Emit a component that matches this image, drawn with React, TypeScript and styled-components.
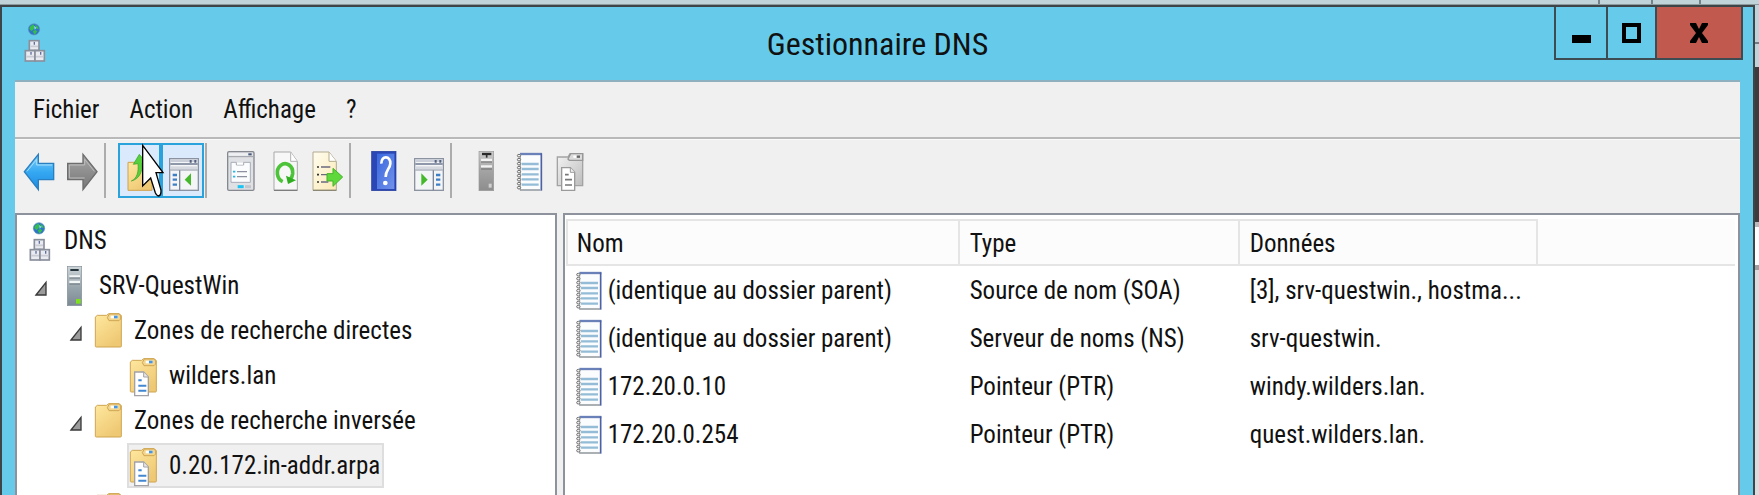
import React from "react";
import styled, { createGlobalStyle, css } from "styled-components";

const GlobalStyle = createGlobalStyle`
  *, *::before, *::after { box-sizing: border-box; }
  body {
    margin: 0;
    color: #111;
    font-family: "Roboto Condensed", "Open Sans", "Liberation Sans", sans-serif;
    font-size: 25px;
    line-height: 32px;
  }
  button { font: inherit; color: inherit; background: none; border: 0; padding: 0; margin: 0; }
  ul { list-style: none; margin: 0; padding: 0; }
  svg { display: block; overflow: visible; flex: none; }
`;

/* ---------- desktop behind the window ---------- */

const Desktop = styled.div`
  display: flex;
  flex-direction: column;
  height: 100vh;
  overflow: hidden;
  background: #c0d3d8;
`;

const BackTabs = styled.div`
  display: flex;
  justify-content: flex-end;
  flex: none;
  height: 5px;
  border-bottom: 1px solid #8d9a9e;
`;

const BackTab = styled.div<{ $width: number }>`
  width: ${(p) => p.$width}px;
  border-left: 2px solid #75828a;
`;

const Stage = styled.div`
  display: flex;
  flex: 1;
  min-height: 0;
`;

const BackEdge = styled.div`
  display: flex;
  flex-direction: column;
  flex: none;
  width: 4px;
`;

const EdgePart = styled.div<{ $height?: number; $color: string }>`
  background: ${(p) => p.$color};
  ${(p) => (p.$height ? css`height: ${p.$height}px; flex: none;` : css`flex: 1;`)}
`;

/* ---------- window ---------- */

const Window = styled.main`
  display: flex;
  flex-direction: column;
  flex: 1;
  min-width: 0;
  background: #66cbea;
  border: 2px solid #3d4549;
  border-bottom: 0;
`;

const TitleBar = styled.header`
  display: grid;
  grid-template-columns: 1fr auto 1fr;
  align-items: start;
  flex: none;
  height: 73px;
`;

const AppIcon = styled.span`
  padding: 15px 0 0 18px;
`;

const Title = styled.h1`
  margin: 0;
  padding-top: 17px;
  font-size: 32px;
  font-weight: 400;
  line-height: 40px;
`;

const Caption = styled.div`
  display: flex;
  justify-self: end;
  margin-right: 10px;
  border: 2px solid #3d4b52;
  border-top: 0;
`;

const CaptionButton = styled.button<{ $width: number; $danger?: boolean }>`
  display: flex;
  align-items: center;
  justify-content: center;
  width: ${(p) => p.$width}px;
  height: 51px;
  background: ${(p) => (p.$danger ? "#c1594f" : "transparent")};
  & + & { border-left: 2px solid #3d4b52; }
`;

const Client = styled.div`
  display: flex;
  flex-direction: column;
  flex: 1;
  min-height: 0;
  margin: 0 13px;
  background: #f0f0f0;
  border-top: 2px solid #8fb0be;
`;

const MenuBar = styled.nav`
  display: flex;
  gap: 30px;
  flex: none;
  padding: 12px 18px 11px;
  border-bottom: 2px solid #b9b9b9;
`;

const Toolbar = styled.div`
  display: flex;
  flex: none;
  padding: 3px 2px 15px;
  border-top: 1px solid #f8fafc;
`;

const ToolButton = styled.button<{ $active?: boolean }>`
  position: relative;
  display: flex;
  align-items: center;
  justify-content: center;
  width: 43px;
  height: 55px;
  ${(p) =>
    p.$active &&
    css`
      background: #dbe9fc;
      box-shadow: inset 0 0 0 2px #2aa2dc;
    `}
`;

const ToolSeparator = styled.span`
  width: 2px;
  margin: 0 12px 0 1px;
  background: #acacac;
`;

const Pointer = styled.svg`
  position: absolute;
  left: 24px;
  top: 1px;
  z-index: 1;
`;

const Panes = styled.div`
  display: flex;
  gap: 6px;
  flex: 1;
  min-height: 0;
`;

const pane = css`
  background: #fff;
  border: 2px solid #8d929c;
  border-bottom: 0;
  overflow: hidden;
`;

const TreePane = styled.section`
  ${pane}
  flex: none;
  width: 31.4%;
  padding-top: 3px;
`;

const ListPane = styled.section`
  ${pane}
  flex: 1;
  min-width: 0;
  padding: 4px 3px 0 1px;
`;

/* ---------- tree ---------- */

const TreeRow = styled.li<{ $level: number }>`
  display: flex;
  height: 45px;
  padding-left: ${(p) => (p.$level ? p.$level * 35 - 17 : 5)}px;
`;

const Twisty = styled.span`
  display: flex;
  align-items: center;
  width: 22px;
  padding-top: 4px;
`;

const TreeItem = styled.span<{ $selected?: boolean }>`
  display: flex;
  align-items: center;
  gap: 11px;
  padding: 0 4px 0 3px;
  white-space: nowrap;
  ${(p) =>
    p.$selected &&
    css`
      background: #f0f0f0;
      box-shadow: inset 0 0 0 2px #dedede;
    `}
`;

/* ---------- record list ---------- */

const RecordTable = styled.table`
  width: 100%;
  table-layout: fixed;
  border-collapse: separate;
  border-spacing: 0;
`;

const Column = styled.col<{ $width?: number }>`
  ${(p) => p.$width && css`width: ${p.$width}px;`}
`;

const HeadCell = styled.th`
  height: 47px;
  padding: 2px 10px 0;
  font-weight: 400;
  text-align: left;
  background: #fcfcfc;
  border: 2px solid #e5e5e5;
  border-left-width: 0;
  &:first-child { border-left-width: 2px; padding-left: 9px; }
  &:last-child { border-top-color: transparent; border-right: 0; }
`;

const Cell = styled.td`
  height: 48px;
  padding: 2px 10px 0;
  overflow: hidden;
  text-overflow: ellipsis;
  white-space: nowrap;
`;

const NameCell = styled.span`
  display: flex;
  align-items: center;
  gap: 6px;
`;

/* ---------- icons ---------- */

const ToolSvg = ({ children }: { children: React.ReactNode }) => (
  <svg width="32" height="40" viewBox="0 0 96 120" aria-hidden="true">{children}</svg>
);
const SlotSvg = ({ children }: { children: React.ReactNode }) => (
  <svg width="28" height="40" viewBox="0 0 84 120" aria-hidden="true">{children}</svg>
);

const HiddenDefs = styled.svg`
  position: absolute;
`;

const Gradients = () => (
  <HiddenDefs width="0" height="0" aria-hidden="true">
    <defs>
      <linearGradient id="blue" x2="0" y2="1"><stop stopColor="#7fd0fa" /><stop offset=".5" stopColor="#35a8f2" /><stop offset="1" stopColor="#1c8ae0" /></linearGradient>
      <linearGradient id="grey" x2="0" y2="1"><stop stopColor="#a5a5a5" /><stop offset="1" stopColor="#777" /></linearGradient>
      <linearGradient id="folder" x2=".6" y2="1"><stop stopColor="#ffe9a0" /><stop offset="1" stopColor="#eec873" /></linearGradient>
      <linearGradient id="steel" x2="0" y2="1"><stop stopColor="#cdd5d8" /><stop offset=".55" stopColor="#98a4ab" /><stop offset="1" stopColor="#7b8993" /></linearGradient>
      <linearGradient id="metal" x2="0" y2="1"><stop stopColor="#cccccc" /><stop offset=".5" stopColor="#a3a3a3" /><stop offset="1" stopColor="#8d8d8d" /></linearGradient>
      <linearGradient id="cream" x2="1" y2="1"><stop stopColor="#fffdf0" /><stop offset="1" stopColor="#fbe9b4" /></linearGradient>
      <linearGradient id="royal" x2="1" y2="1"><stop stopColor="#3a68dd" /><stop offset="1" stopColor="#7191ea" /></linearGradient>
      <linearGradient id="paleGrey" x2="1" y2="1"><stop stopColor="#f4f4f4" /><stop offset="1" stopColor="#bdbdbd" /></linearGradient>
    </defs>
  </HiddenDefs>
);

const DnsIcon = () => (
  <SlotSvg>
    <circle cx="42" cy="22" r="17" fill="#2f74c9" stroke="#5f95bd" strokeWidth="2" />
    <path d="M30 14l10-7 4 8-4 8-6 4-6-6zM45 8l9 6 2 8-6-2zM38 28l8-4 6 4-8 10z" fill="#35bf4a" />
    <path d="M42 12l8 5-6 6z" fill="#8fd8f5" />
    <g fill="#e9ebf0" stroke="#8a8f9c" strokeWidth="5">
      <rect x="28" y="56" width="29" height="29" />
      <rect x="16" y="86" width="29" height="31" />
      <rect x="45" y="86" width="28" height="31" />
    </g>
    <path d="M31 73h23M19 104h23M48 104h22" stroke="#c9ccd4" strokeWidth="5" />
    <path d="M43 60v8M33 90v8M62 90v8" stroke="#5f6fa0" strokeWidth="4" />
  </SlotSvg>
);

const TreeServerIcon = () => (
  <SlotSvg>
    <rect x="22" y="1" width="43" height="118" fill="url(#steel)" stroke="#84919a" strokeWidth="2" />
    <path d="M31 9h25v6H31z" fill="#26343b" />
    <path d="M28 31h32M28 48h32" stroke="#f2f6f7" strokeWidth="7" />
    <path d="M28 36h32M28 54h32" stroke="#68757c" strokeWidth="3" />
    <rect x="48" y="99" width="14" height="14" fill="#7ee01f" />
  </SlotSvg>
);

const folderShape = (
  <>
    <path d="M1 18l6-5h28l6-5h32l6 6v92q0 2-3 2H4q-3 0-3-2z" fill="url(#folder)" stroke="#cfa552" strokeWidth="3" />
    <path d="M37 20l6-11h28l6 5v10l-5 5H42z" fill="#f4d58c" stroke="#cfa552" strokeWidth="3" />
    <rect x="47" y="14" width="22" height="8" fill="#fff" />
    <rect x="57" y="14" width="11" height="8" fill="#4a95dd" />
  </>
);

const FolderIcon = () => <SlotSvg>{folderShape}</SlotSvg>;

const ZoneIcon = () => (
  <SlotSvg>
    {folderShape}
    <path d="M14 48h27l14 15v56H14z" fill="#fff" stroke="#a2a2a6" strokeWidth="4" />
    <path d="M41 49v14h14" fill="#e9e9ec" stroke="#a2a2a6" strokeWidth="3" />
    <path d="M25 73h10M25 89h24M25 104h24" stroke="#4287cf" strokeWidth="6" />
  </SlotSvg>
);

const TwistyIcon = () => (
  <svg width="12" height="16" viewBox="0 0 36 48" aria-hidden="true">
    <path d="M3 45L33 7V45Z" fill="#9b9b9b" stroke="#3a3a3a" strokeWidth="4" />
  </svg>
);

const rings = [8, 20, 32, 44, 56, 68, 80, 92, 104];
const notebookShape = (
  <>
    <path d="M10 2H75V112H10z" fill="#fbfcfe" />
    <path d="M10 3H76" stroke="#6a80b8" strokeWidth="7" />
    <path d="M74 1V113" stroke="#4d62a6" strokeWidth="5" />
    <path d="M10 111H72" stroke="#9aa0a6" strokeWidth="5" />
    <path d="M11 4V112" stroke="#9a9a9a" strokeWidth="3" />
    <path d="M15 33H66M15 48H66M15 64H66M15 79H66M15 95H66" stroke="#94bcd6" strokeWidth="7" />
    {rings.map((y) => (
      <ellipse key={y} cx="7" cy={y} rx="5" ry="4" fill="#f0f0f0" stroke="#707070" strokeWidth="3" />
    ))}
  </>
);

const RecordIcon = () => (
  <svg width="26" height="38" viewBox="0 0 78 114" aria-hidden="true">{notebookShape}</svg>
);

const BackIcon = () => (
  <ToolSvg>
    <path d="M4 62L46 10V37H92V86H46V116Z" fill="url(#blue)" stroke="#2a7fc0" strokeWidth="4" />
    <path d="M12 61L41 25V42H87" fill="none" stroke="#a5def9" strokeWidth="3" />
  </ToolSvg>
);

const ForwardIcon = () => (
  <ToolSvg>
    <path d="M93 62L51 10V37H5V86H51V116Z" fill="url(#grey)" stroke="#6d6d6d" strokeWidth="4" />
    <path d="M85 61L56 25V42H10V81H56" fill="none" stroke="#bdbdbd" strokeWidth="3" />
  </ToolSvg>
);

const UpIcon = () => (
  <ToolSvg>
    <path d="M12 34H50L56 50H84V118H12Z" fill="url(#folder)" stroke="#d0a24e" strokeWidth="3" />
    <path d="M22 90C40 82 44 62 42 38L28 40L46 10L66 34L54 36C56 66 44 84 22 90Z" fill="#58cf3c" stroke="#35a022" strokeWidth="2" />
  </ToolSvg>
);

const consoleFrame = (
  <>
    <rect x="8" y="23" width="86" height="95" fill="#f4f5f7" stroke="#8b93a1" strokeWidth="4" />
    <path d="M10 29H92" stroke="#c9ced8" strokeWidth="8" />
    <path d="M10 39H92" stroke="#7a859b" strokeWidth="5" />
    <path d="M68 31h6M82 31h6" stroke="#53617f" strokeWidth="8" />
    <path d="M10 50H92" stroke="#d5d8de" strokeWidth="8" />
    <path d="M10 57H92" stroke="#8b93a1" strokeWidth="3" />
  </>
);

const TreeToggleIcon = () => (
  <ToolSvg>
    {consoleFrame}
    <path d="M38 58V118" stroke="#7a859b" strokeWidth="4" />
    <path d="M17 72h13M17 86h13M17 101h13" stroke="#3f7fc6" strokeWidth="7" />
    <path d="M72 67V104L53 86Z" fill="#45b82c" />
  </ToolSvg>
);

const ActionPaneIcon = () => (
  <ToolSvg>
    {consoleFrame}
    <path d="M64 58V118" stroke="#7a859b" strokeWidth="4" />
    <path d="M72 72h13M72 86h13M72 101h13" stroke="#3f7fc6" strokeWidth="7" />
    <path d="M28 67V104L47 86Z" fill="#45b82c" />
  </ToolSvg>
);

const PropertiesIcon = () => (
  <ToolSvg>
    <rect x="8" y="2" width="79" height="116" rx="4" fill="#dfe1e4" stroke="#85888f" strokeWidth="4" />
    <path d="M11 10H70" stroke="#eef0f2" strokeWidth="7" />
    <path d="M10 17H86" stroke="#9da1a8" strokeWidth="3" />
    <path d="M70 10h10" stroke="#4a5a78" strokeWidth="6" />
    <path d="M18 34H34V42H56V34H76V94H18Z" fill="#fbfcfd" stroke="#a6abb6" strokeWidth="3" />
    <path d="M36 38H54" stroke="#fff" strokeWidth="6" />
    <path d="M24 62h7M24 77h7" stroke="#28b7ea" strokeWidth="5" />
    <path d="M36 62H66M36 77H66" stroke="#8b919f" strokeWidth="4" />
    <path d="M38 107H56" stroke="#19c3f2" strokeWidth="9" />
    <path d="M60 107H78" stroke="#c3c6cc" strokeWidth="9" />
  </ToolSvg>
);

const RefreshIcon = () => (
  <ToolSvg>
    <path d="M18 3H68L88 31V118H18Z" fill="#f6f7f6" stroke="#a9a9a9" strokeWidth="3" />
    <path d="M18 118H88" stroke="#7d7d7d" strokeWidth="4" />
    <path d="M68 4V31H87" fill="#fff" stroke="#b2b2b2" strokeWidth="3" />
    <path d="M44 92C26 84 22 56 38 43C54 30 76 44 74 68C73 76 70 82 66 86" fill="none" stroke="#4cc338" strokeWidth="11" />
    <path d="M54 74L84 88L60 99Z" fill="#2fae20" />
  </ToolSvg>
);

const ExportIcon = () => (
  <ToolSvg>
    <path d="M6 3H54L76 31V118H6Z" fill="url(#cream)" stroke="#b3aa90" strokeWidth="3" />
    <path d="M6 118H76" stroke="#8d8874" strokeWidth="4" />
    <path d="M54 4V31H75" fill="#fff" stroke="#b3aa90" strokeWidth="3" />
    <path d="M18 48h6M18 71h6M18 93h6" stroke="#333" strokeWidth="5" />
    <path d="M30 48H58M30 71H52M30 93H52" stroke="#6b6a80" strokeWidth="4" />
    <path d="M48 68H66V52L95 78L66 106V90H48Z" fill="#5fd83c" stroke="#43b328" strokeWidth="3" />
  </ToolSvg>
);

const HelpIcon = () => (
  <ToolSvg>
    <rect x="8" y="1" width="73" height="118" fill="#2b47b5" stroke="#22399b" strokeWidth="2" />
    <rect x="24" y="8" width="52" height="106" fill="url(#royal)" />
    <path d="M37 38C36 12 66 14 64 38C63 54 50 56 50 78" fill="none" stroke="#fff" strokeWidth="8" />
    <circle cx="49" cy="96" r="7" fill="#fff" />
  </ToolSvg>
);

const ServerIcon = () => (
  <ToolSvg>
    <rect x="27" y="1" width="44" height="118" fill="url(#metal)" stroke="#9a9a9a" strokeWidth="2" />
    <path d="M36 9H64" stroke="#2a2a2a" strokeWidth="7" />
    <path d="M50 12v8" stroke="#333" strokeWidth="5" />
    <path d="M33 27H66M33 46H66" stroke="#f2f2f2" strokeWidth="7" />
    <path d="M33 33H66M33 54H66" stroke="#6d6d6d" strokeWidth="3" />
    <rect x="56" y="98" width="9" height="12" fill="#cfcfcf" />
  </ToolSvg>
);

const NotebookIcon = () => (
  <ToolSvg><g transform="translate(11 6)">{notebookShape}</g></ToolSvg>
);

const ZoneToolIcon = () => (
  <ToolSvg>
    <path d="M4 18H36L42 8H80V104H4Z" fill="url(#paleGrey)" stroke="#a3a3a3" strokeWidth="4" />
    <path d="M36 24L44 8H80V28H40Z" fill="#dcdcdc" stroke="#979797" strokeWidth="4" />
    <path d="M52 17h12" stroke="#fff" strokeWidth="7" />
    <path d="M62 17h10" stroke="#666" strokeWidth="7" />
    <path d="M17 50H43L56 64V118H17Z" fill="#fff" stroke="#9a9a9a" strokeWidth="4" />
    <path d="M43 50V64H56" fill="#eee" stroke="#9a9a9a" strokeWidth="3" />
    <path d="M27 71H38M27 86H48M27 102H48" stroke="#777" strokeWidth="5" />
  </ToolSvg>
);

const PointerIcon = () => (
  <Pointer width="22" height="54" viewBox="0 0 66 162" aria-hidden="true">
    <path d="M2 4L63 86H42L57 138Q58 155 49 156Q43 154 40 146L26 102L2 126Z" fill="#fff" stroke="#000" strokeWidth="4" />
  </Pointer>
);

/* ---------- data ---------- */

const menus = ["Fichier", "Action", "Affichage", "?"];

type Tool = { label: string; icon: React.FC; active?: boolean; pointed?: boolean };
const toolGroups: Tool[][] = [
  [
    { label: "Précédent", icon: BackIcon },
    { label: "Suivant", icon: ForwardIcon },
  ],
  [
    { label: "Monter d'un niveau", icon: UpIcon, active: true, pointed: true },
    { label: "Arborescence", icon: TreeToggleIcon, active: true },
  ],
  [
    { label: "Propriétés", icon: PropertiesIcon },
    { label: "Actualiser", icon: RefreshIcon },
    { label: "Exporter", icon: ExportIcon },
  ],
  [
    { label: "Aide", icon: HelpIcon },
    { label: "Volet Actions", icon: ActionPaneIcon },
  ],
  [
    { label: "Serveur", icon: ServerIcon },
    { label: "Enregistrement", icon: NotebookIcon },
    { label: "Zone", icon: ZoneToolIcon },
  ],
];

type Node = { level: number; icon: React.FC; label?: string; open?: boolean; selected?: boolean };
const nodes: Node[] = [
  { level: 0, icon: DnsIcon, label: "DNS" },
  { level: 1, icon: TreeServerIcon, label: "SRV-QuestWin", open: true },
  { level: 2, icon: FolderIcon, label: "Zones de recherche directes", open: true },
  { level: 3, icon: ZoneIcon, label: "wilders.lan" },
  { level: 2, icon: FolderIcon, label: "Zones de recherche inversée", open: true },
  { level: 3, icon: ZoneIcon, label: "0.20.172.in-addr.arpa", selected: true },
  { level: 2, icon: FolderIcon },
];

const records = [
  ["(identique au dossier parent)", "Source de nom (SOA)", "[3], srv-questwin., hostma..."],
  ["(identique au dossier parent)", "Serveur de noms (NS)", "srv-questwin."],
  ["172.20.0.10", "Pointeur (PTR)", "windy.wilders.lan."],
  ["172.20.0.254", "Pointeur (PTR)", "quest.wilders.lan."],
];

export default function App() {
  return (
    <Desktop>
      <GlobalStyle />
      <Gradients />
      <BackTabs>
        <BackTab $width={53} />
        <BackTab $width={48} />
        <BackTab $width={60} />
      </BackTabs>
      <Stage>
        <Window>
          <TitleBar>
            <AppIcon><DnsIcon /></AppIcon>
            <Title>Gestionnaire DNS</Title>
            <Caption>
              <CaptionButton $width={50} aria-label="Réduire">
                <svg width="19" height="20" viewBox="0 0 19 20" aria-hidden="true"><path d="M0 12H19V20H0Z" /></svg>
              </CaptionButton>
              <CaptionButton $width={49} aria-label="Agrandir">
                <svg width="19" height="20" viewBox="0 0 19 20" aria-hidden="true"><path d="M2 2H17V18H2Z" fill="none" stroke="#000" strokeWidth="4" /></svg>
              </CaptionButton>
              <CaptionButton $width={86} $danger aria-label="Fermer">
                <svg width="18" height="20" viewBox="0 0 18 20" aria-hidden="true"><path d="M0 0H6L9 6L12 0H18V2L12 10L18 18V20H12L9 14L6 20H0V18L6 10L0 2Z" /></svg>
              </CaptionButton>
            </Caption>
          </TitleBar>
          <Client>
            <MenuBar>
              {menus.map((m) => <button key={m}>{m}</button>)}
            </MenuBar>
            <Toolbar role="toolbar">
              {toolGroups.map((group, i) => (
                <React.Fragment key={i}>
                  {i > 0 && <ToolSeparator />}
                  {group.map(({ label, icon: Icon, active, pointed }) => (
                    <ToolButton key={label} aria-label={label} $active={active}>
                      <Icon />
                      {pointed && <PointerIcon />}
                    </ToolButton>
                  ))}
                </React.Fragment>
              ))}
            </Toolbar>
            <Panes>
              <TreePane>
                <ul role="tree">
                  {nodes.map(({ level, icon: Icon, label, open, selected }, i) => (
                    <TreeRow key={i} role="treeitem" aria-level={level + 1} aria-selected={!!selected} $level={level}>
                      {level > 0 && <Twisty>{open && <TwistyIcon />}</Twisty>}
                      <TreeItem $selected={selected}>
                        <Icon />
                        {label}
                      </TreeItem>
                    </TreeRow>
                  ))}
                </ul>
              </TreePane>
              <ListPane>
                <RecordTable>
                  <colgroup>
                    <Column $width={394} />
                    <Column $width={280} />
                    <Column $width={298} />
                    <Column />
                  </colgroup>
                  <thead>
                    <tr>
                      <HeadCell scope="col">Nom</HeadCell>
                      <HeadCell scope="col">Type</HeadCell>
                      <HeadCell scope="col">Données</HeadCell>
                      <HeadCell aria-hidden="true" />
                    </tr>
                  </thead>
                  <tbody>
                    {records.map(([name, type, data]) => (
                      <tr key={name + type + data}>
                        <Cell><NameCell><RecordIcon />{name}</NameCell></Cell>
                        <Cell>{type}</Cell>
                        <Cell>{data}</Cell>
                        <Cell />
                      </tr>
                    ))}
                  </tbody>
                </RecordTable>
              </ListPane>
            </Panes>
          </Client>
        </Window>
        <BackEdge>
          <EdgePart $height={37} $color="#c0d3d8" />
          <EdgePart $height={2} $color="#6f7c84" />
          <EdgePart $height={23} $color="#c0d3d8" />
          <EdgePart $height={155} $color="#3c3c3c" />
          <EdgePart $height={5} $color="#b9b9b9" />
          <EdgePart $height={38} $color="#ffffff" />
          <EdgePart $height={5} $color="#a0a0a0" />
          <EdgePart $color="#dcdcdc" />
        </BackEdge>
      </Stage>
    </Desktop>
  );
}
